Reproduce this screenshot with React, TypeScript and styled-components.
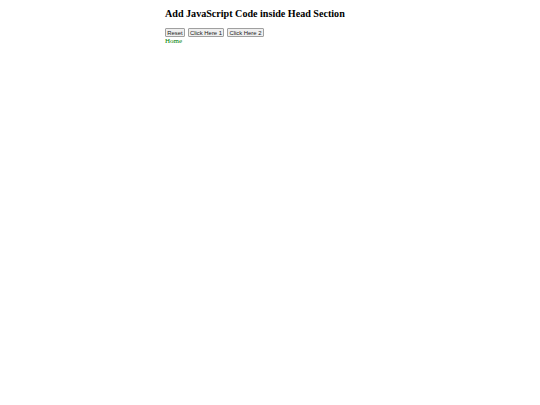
import React from "react";
import styled, { createGlobalStyle } from "styled-components";

const Global = createGlobalStyle`
  html, body { margin: 0; padding: 0; background: #ffffff; }
  body { font-family: "Liberation Serif", "Times New Roman", serif; }
`;

const Page = styled.div`
  width: 210px;
  margin: 0 auto;
  padding-top: 8px;
`;

const Title = styled.h2`
  margin: 0 0 8px 0;
  font-family: "Liberation Serif", serif;
  font-weight: bold;
  font-size: 10.1px;
  line-height: 12px;
  color: #000000;
`;

const Toolbar = styled.div`
  display: flex;
  gap: 3px;
  align-items: center;
`;

const Button = styled.button`
  font-family: "Liberation Sans", Arial, sans-serif;
  font-size: 5.9px;
  line-height: 6px;
  padding: 0 1.2px;
  height: 9px;
  border: 1px solid #a0a0a0;
  border-radius: 1px;
  background: #efefef;
  color: #222222;
`;

const HomeLink = styled.div`
  font-family: "Liberation Serif", serif;
  font-size: 7px;
  line-height: 8px;
  color: #008000;
`;

export default function App() {
  return (
    <>
      <Global />
      <Page>
        <Title>Add JavaScript Code inside Head Section</Title>
        <Toolbar>
          <Button>Reset</Button>
          <Button>Click Here 1</Button>
          <Button>Click Here 2</Button>
        </Toolbar>
        <HomeLink>Home</HomeLink>
      </Page>
    </>
  );
}
